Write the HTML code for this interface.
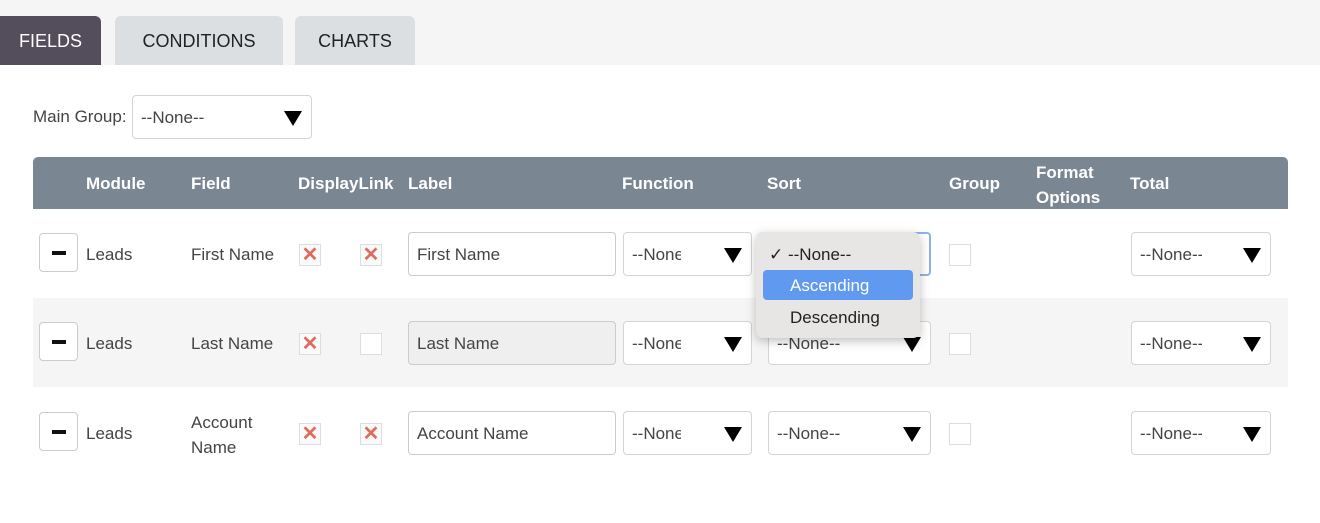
<!DOCTYPE html>
<html><head><style>
*{box-sizing:border-box;margin:0;padding:0}
body{width:1320px;height:523px;background:#fff;font-family:"Liberation Sans",sans-serif;color:#333;position:relative;overflow:hidden}
.a{position:absolute}
.top{left:0;top:0;width:1320px;height:65px;background:#f5f5f5}
.tab{top:16px;height:49px;border-radius:6px 6px 0 0;font-size:18px;line-height:51px;text-align:center;color:#222;background:#dcdfe2}
.hdr{left:33px;top:157px;width:1255px;height:52px;background:#7a8691;border-radius:5px 5px 0 0}
.h{color:#fff;font-weight:bold;font-size:17px}
.t{font-size:17px;color:#444}
.sel{height:44px;border:1px solid #d4d4d4;border-radius:4px;background:#fff;font-size:17px;line-height:44px;padding-left:8px;color:#444;overflow:hidden;white-space:nowrap}
.sel span{display:inline-block;overflow:hidden;vertical-align:top}
.sel:after{content:"";position:absolute;right:9px;top:15px;border-left:9px solid transparent;border-right:9px solid transparent;border-top:15px solid #000}
.btn{width:39px;height:39px;border:1px solid #ccc;border-radius:4px;background:#fff}
.btn:after{content:"";position:absolute;left:12px;top:17px;width:14px;height:4px;background:#111}
.cb{width:22px;height:22px;border:1px solid #ddd;background:#fafafa}
.x{color:#e06a5c;font-size:20px;line-height:20px;text-align:center;font-weight:bold}
.inp{height:44px;border:1px solid #ccc;border-radius:4px;font-size:17px;line-height:44px;padding-left:8px;color:#444}
</style></head><body>
<div class="a top"></div>
<div class="a tab" style="left:0;width:101px;background:#534d5c;color:#fff;border-top-left-radius:0">FIELDS</div>
<div class="a tab" style="left:115px;width:168px">CONDITIONS</div>
<div class="a tab" style="left:295px;width:120px">CHARTS</div>
<div class="a t" style="left:33px;top:107px">Main Group:</div>
<div class="a sel" style="left:132px;top:95px;width:180px">--None--</div>
<div class="a hdr"></div>
<div class="a h" style="left:86px;top:174px">Module</div>
<div class="a h" style="left:191px;top:174px">Field</div>
<div class="a h" style="left:298px;top:174px">DisplayLink</div>
<div class="a h" style="left:408px;top:174px">Label</div>
<div class="a h" style="left:622px;top:174px">Function</div>
<div class="a h" style="left:767px;top:174px">Sort</div>
<div class="a h" style="left:949px;top:174px">Group</div>
<div class="a h" style="left:1036px;top:160px;line-height:25px">Format<br>Options</div>
<div class="a h" style="left:1130px;top:174px">Total</div>
<div class="a" style="left:33px;top:298px;width:1255px;height:89px;background:#f5f5f5"></div>

<!-- row 1 -->
<div class="a btn" style="left:39px;top:233px"></div>
<div class="a t" style="left:86px;top:245px">Leads</div>
<div class="a t" style="left:191px;top:245px">First Name</div>
<div class="a cb x" style="left:299px;top:244px">✕</div>
<div class="a cb x" style="left:360px;top:244px">✕</div>
<div class="a inp" style="left:408px;top:232px;width:208px">First Name</div>
<div class="a sel" style="left:623px;top:232px;width:129px"><span style="width:49px">--None--</span></div>
<div class="a sel" style="left:768px;top:232px;width:163px;border:2px solid #8fb3e6"></div>
<div class="a cb" style="left:949px;top:244px;background:#fff"></div>
<div class="a sel" style="left:1131px;top:232px;width:140px"><span style="width:62px">--None--</span></div>

<!-- row 2 -->
<div class="a btn" style="left:39px;top:322px"></div>
<div class="a t" style="left:86px;top:334px">Leads</div>
<div class="a t" style="left:191px;top:334px">Last Name</div>
<div class="a cb x" style="left:299px;top:333px">✕</div>
<div class="a cb" style="left:360px;top:333px;background:#fff"></div>
<div class="a inp" style="left:408px;top:321px;width:208px;background:#efefef">Last Name</div>
<div class="a sel" style="left:623px;top:321px;width:129px"><span style="width:49px">--None--</span></div>
<div class="a sel" style="left:768px;top:321px;width:163px">--None--</div>
<div class="a cb" style="left:949px;top:333px;background:#fff"></div>
<div class="a sel" style="left:1131px;top:321px;width:140px"><span style="width:62px">--None--</span></div>

<!-- row 3 -->
<div class="a btn" style="left:39px;top:412px"></div>
<div class="a t" style="left:86px;top:424px">Leads</div>
<div class="a t" style="left:191px;top:410px;line-height:25px">Account<br>Name</div>
<div class="a cb x" style="left:299px;top:423px">✕</div>
<div class="a cb x" style="left:360px;top:423px">✕</div>
<div class="a inp" style="left:408px;top:411px;width:208px">Account Name</div>
<div class="a sel" style="left:623px;top:411px;width:129px"><span style="width:49px">--None--</span></div>
<div class="a sel" style="left:768px;top:411px;width:163px">--None--</div>
<div class="a cb" style="left:949px;top:423px;background:#fff"></div>
<div class="a sel" style="left:1131px;top:411px;width:140px"><span style="width:62px">--None--</span></div>

<!-- dropdown popup -->
<div class="a" style="left:756px;top:232px;width:164px;height:106px;background:#e8e6e5;border-radius:7px;box-shadow:0 3px 10px rgba(0,0,0,.25);font-size:17px;color:#222">
<div class="a" style="left:13px;top:13px">✓ --None--</div>
<div class="a" style="left:7px;top:38px;width:150px;height:30px;background:#5f9af0;border-radius:4px;color:#fff;line-height:31px;padding-left:27px">Ascending</div>
<div class="a" style="left:34px;top:76px">Descending</div>
</div>
</body></html>
